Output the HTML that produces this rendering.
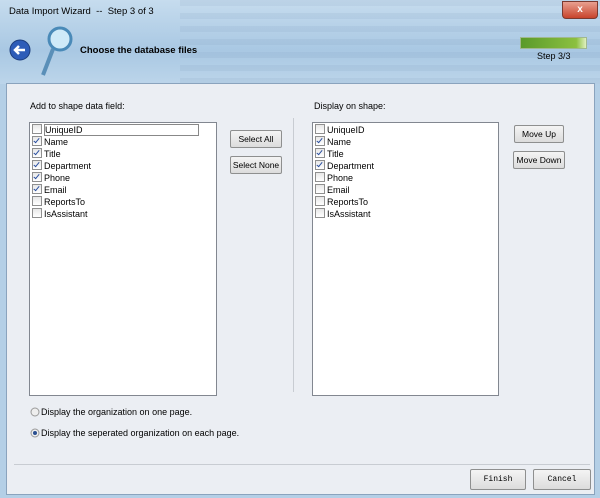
<html><head><style>
body{margin:0;width:600px;height:498px;overflow:hidden;font-family:"Liberation Sans",sans-serif;font-size:9px;color:#000;position:relative;background:#b4cfe6}
.a{position:absolute}
.hdr{left:0;top:0;width:600px;height:84px;background:linear-gradient(180deg,#c6dcee,#a9c8e3 60%,#bcd5ea);}
.blur{background:repeating-linear-gradient(180deg,rgba(90,120,160,.09) 0 6px,rgba(255,255,255,0) 6px 13px)}
.panel{left:6px;top:83px;width:587px;height:410px;background:#ebeef3;border:1px solid #8aa3bd}
.lb{background:#fff;border:1px solid #828790}
.it{position:absolute;left:2px;height:12px;line-height:12px;white-space:nowrap}
.cb{position:relative;display:inline-block;width:8px;height:8px;border:1px solid #8f8f8f;background:linear-gradient(#e8e8e8,#fff);vertical-align:-1px;margin-right:2px;overflow:hidden}
.ck::after{content:"";position:absolute;left:2px;top:0px;width:2px;height:5px;border:solid #2a4fa0;border-width:0 1.5px 1.5px 0;transform:rotate(40deg)}
.btn{background:linear-gradient(#f4f4f4,#dcdcdc);border:1px solid #8e8f8f;border-radius:2px;text-align:center;font-size:8.5px}
</style></head><body>
<div class="a hdr"></div>
<div class="a blur" style="left:180px;top:0;width:420px;height:84px"></div>
<div class="a" style="left:9px;top:6px;font-size:9.5px">Data Import Wizard &nbsp;-- &nbsp;Step 3 of 3</div>
<div class="a" style="left:562px;top:1px;width:34px;height:16px;background:linear-gradient(#e8a090,#c8442c);border:1px solid #7a3a30;border-radius:0 0 4px 4px;color:#fff;text-align:center;font-weight:bold;font-size:10px;line-height:16px">x</div>
<svg class="a" style="left:8px;top:38px" width="24" height="24"><circle cx="12" cy="12" r="10" fill="#2d5cb8" stroke="#1c3d7e"/><path d="M17 12H8M11 8l-4 4 4 4" stroke="#fff" stroke-width="2.5" fill="none"/></svg>
<svg class="a" style="left:38px;top:25px" width="36" height="56"><circle cx="22" cy="14" r="11" fill="#cfeaf8" stroke="#4a8ab8" stroke-width="3"/><line x1="15" y1="24" x2="5" y2="50" stroke="#5a8fb8" stroke-width="4"/></svg>
<div class="a" style="left:80px;top:45px;font-weight:bold;font-size:9.5px">Choose the database files</div>
<div class="a" style="left:520px;top:37px;width:65px;height:10px;background:linear-gradient(90deg,#5a9a2a,#8cc040 85%,#e0f0c0);border:1px solid #a0b890"></div>
<div class="a" style="left:537px;top:51px;font-size:9px">Step 3/3</div>
<div class="a panel"></div>
<div class="a" style="left:30px;top:101px">Add to shape data field:</div>
<div class="a lb" style="left:29px;top:122px;width:186px;height:272px">
<div class="it" style="top:1px"><span class="cb"></span><span style="border:1px solid #888;padding-right:115px">UniqueID</span></div>
<div class="it" style="top:13px"><span class="cb ck"></span>Name</div>
<div class="it" style="top:25px"><span class="cb ck"></span>Title</div>
<div class="it" style="top:37px"><span class="cb ck"></span>Department</div>
<div class="it" style="top:49px"><span class="cb ck"></span>Phone</div>
<div class="it" style="top:61px"><span class="cb ck"></span>Email</div>
<div class="it" style="top:73px"><span class="cb"></span>ReportsTo</div>
<div class="it" style="top:85px"><span class="cb"></span>IsAssistant</div>
</div>
<div class="a btn" style="left:230px;top:130px;width:50px;height:16px;line-height:16px">Select All</div>
<div class="a btn" style="left:230px;top:156px;width:50px;height:16px;line-height:16px">Select None</div>
<div class="a" style="left:293px;top:118px;width:1px;height:274px;background:#c8ccd2"></div>
<div class="a" style="left:314px;top:101px">Display on shape:</div>
<div class="a lb" style="left:312px;top:122px;width:185px;height:272px">
<div class="it" style="top:1px"><span class="cb"></span>UniqueID</div>
<div class="it" style="top:13px"><span class="cb ck"></span>Name</div>
<div class="it" style="top:25px"><span class="cb ck"></span>Title</div>
<div class="it" style="top:37px"><span class="cb ck"></span>Department</div>
<div class="it" style="top:49px"><span class="cb"></span>Phone</div>
<div class="it" style="top:61px"><span class="cb"></span>Email</div>
<div class="it" style="top:73px"><span class="cb"></span>ReportsTo</div>
<div class="it" style="top:85px"><span class="cb"></span>IsAssistant</div>
</div>
<div class="a btn" style="left:514px;top:125px;width:48px;height:16px;line-height:16px">Move Up</div>
<div class="a btn" style="left:513px;top:151px;width:50px;height:16px;line-height:16px">Move Down</div>
<svg class="a" style="left:30px;top:407px" width="10" height="32"><circle cx="5" cy="5" r="4" fill="#eee" stroke="#999"/><circle cx="5" cy="26" r="4" fill="#eee" stroke="#999"/><circle cx="5" cy="26" r="2" fill="#2a4f90"/></svg>
<div class="a" style="left:41px;top:407px">Display the organization on one page.</div>
<div class="a" style="left:41px;top:428px">Display the seperated organization on each page.</div>
<div class="a" style="left:14px;top:464px;width:576px;height:1px;background:#c8ccd2"></div>
<div class="a btn" style="left:470px;top:469px;width:54px;height:19px;line-height:19px;font-family:'Liberation Mono',monospace;font-size:8px">Finish</div>
<div class="a btn" style="left:533px;top:469px;width:56px;height:19px;line-height:19px;font-family:'Liberation Mono',monospace;font-size:8px">Cancel</div>
</body></html>
